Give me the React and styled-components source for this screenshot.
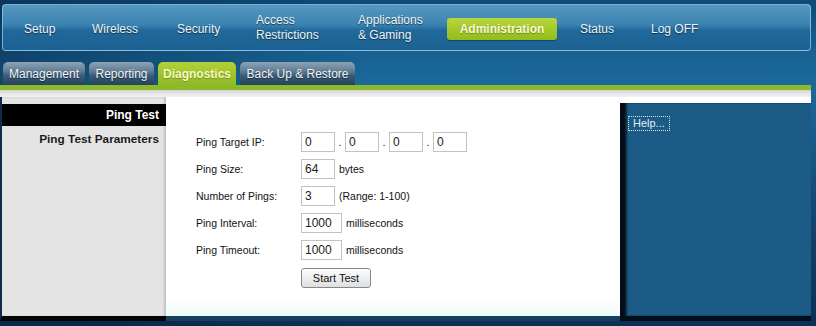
import React from 'react';
import styled, { createGlobalStyle } from 'styled-components';

const GlobalStyle = createGlobalStyle`
  body {
    margin: 0;
    background: #0d3d66;
    font-family: "Liberation Sans", Arial, sans-serif;
  }
`;

const Page = styled.div`
  width: 816px;
  height: 326px;
  box-sizing: border-box;
  padding-top: 4px;
  overflow: hidden;
  background:
    linear-gradient(90deg, rgba(4, 28, 58, 0.45) 0%, rgba(4, 28, 58, 0) 45%),
    linear-gradient(180deg, #0f4a78 0px, #17608f 50px, #1b6a9b 85px, #123f69 240px, #0c2f55 326px);
`;

const NavBar = styled.div`
  width: 809px;
  height: 47px;
  margin-left: 2px;
  box-sizing: border-box;
  border: 1px solid rgba(150, 205, 235, 0.75);
  border-radius: 4px;
  background: linear-gradient(180deg, #5698c0 0%, #3a83b1 44%, #21699a 56%, #1b6293 100%);
  display: flex;
  align-items: center;
  padding: 3px 0 0 21px;
`;

const NavItem = styled.div`
  width: ${(p) => p.$w}px;
  flex: none;
  color: #eef3f7;
  font-size: 12px;
  line-height: 15px;
  text-shadow: 0 1px 1px rgba(0, 0, 0, 0.55);
  margin-top: ${(p) => (p.$two ? '-2px' : '0')};
`;

const AdminButton = styled.div`
  width: 110px;
  height: 22px;
  margin-top: -1px;
  border-radius: 3px;
  background: linear-gradient(180deg, #b9d540 0%, #a6c92a 50%, #93ba1c 100%);
  box-shadow: 0 1px 1px rgba(0, 0, 0, 0.3);
  color: #f7f7d6;
  font-weight: bold;
  font-size: 12px;
  line-height: 22px;
  text-align: center;
  text-shadow: 0 1px 1px rgba(60, 80, 0, 0.5);
`;

const TabRow = styled.div`
  display: flex;
  gap: 4px;
  margin-top: 11px;
  padding-left: 3px;
  height: 23px;
`;

const Tab = styled.div`
  width: ${(p) => p.$w}px;
  box-sizing: border-box;
  border-radius: 5px 5px 0 0;
  font-size: 12px;
  line-height: 24px;
  text-align: center;
  color: ${(p) => (p.$active ? '#f6f6c8' : '#f2f5f8')};
  font-weight: ${(p) => (p.$active ? 'bold' : 'normal')};
  background: ${(p) =>
    p.$active
      ? 'linear-gradient(180deg, #b3d13a 0%, #9fc327 60%, #8dba2b 100%)'
      : 'linear-gradient(180deg, #8ea3b3 0%, #5f7d95 40%, #3a5a77 60%, #23435f 100%)'};
  text-shadow: ${(p) => (p.$active ? '0 1px 1px rgba(60,80,0,.4)' : '0 1px 1px rgba(0,0,0,.5)')};
`;

const Frame = styled.div`
  width: 811px;
  border-top: 5px solid #8cba2b;
`;

const GreyStrip = styled.div`
  height: 7px;
  background: linear-gradient(180deg, #d0d4d0 0%, #e6e6e6 50%, #f2f2f2 100%);
`;

const Columns = styled.div`
  display: flex;
  height: 224px;
`;

const Sidebar = styled.div`
  width: 164px;
  flex: none;
  border-left: 2px solid #0e2b48;
  border-bottom: 5px solid #050505;
  background: #e4e4e4;
  box-shadow: inset -2px 0 2px rgba(0, 0, 0, 0.15);
  padding-top: 7px;
`;

const SideHeader = styled.div`
  height: 22px;
  background: #000;
  color: #fff;
  font-weight: bold;
  font-size: 12px;
  line-height: 22px;
  text-align: right;
  padding-right: 7px;
`;

const SideItem = styled.div`
  color: #1a1a1a;
  font-weight: bold;
  font-size: 11.8px;
  line-height: 14px;
  text-align: right;
  padding: 6px 7px 0 0;
`;

const Main = styled.div`
  flex: 1;
  border-bottom: 5px solid #163f5e;
  background: linear-gradient(180deg, #ffffff 92%, #effafa 100%);
  padding: 35px 0 0 30px;
`;

const Form = styled.div`
  display: grid;
  grid-template-columns: 105px auto;
  row-gap: 7px;
  align-items: center;
`;

const Label = styled.div`
  font-size: 10.5px;
  color: #111;
`;

const Field = styled.div`
  display: flex;
  align-items: center;
  height: 20px;
`;

const Input = styled.div`
  width: ${(p) => p.$w}px;
  height: 20px;
  box-sizing: border-box;
  border: 1px solid #c2c2c2;
  padding-left: 3px;
  font-size: 12px;
  line-height: 18px;
  color: #222;
  background: #fff;
`;

const Dot = styled.span`
  width: 10px;
  text-align: center;
  font-size: 11px;
  color: #222;
`;

const Unit = styled.span`
  margin-left: 4px;
  font-size: 10.5px;
  color: #111;
`;

const StartButton = styled.div`
  grid-column: 2;
  width: 70px;
  height: 20px;
  margin-top: 1px;
  box-sizing: border-box;
  border: 1px solid #7d8b97;
  border-radius: 3px;
  background: linear-gradient(180deg, #fbfbfb 0%, #ececec 60%, #dedede 100%);
  font-size: 11px;
  line-height: 18px;
  text-align: center;
  color: #111;
`;

const HelpCol = styled.div`
  width: 191px;
  flex: none;
  background: #fff;
  padding-top: 6px;
  display: flex;
`;

const HelpPanel = styled.div`
  flex: 1;
  background: #1b5b86;
  border-left: 5px solid #050d18;
  border-bottom: 5px solid #03101c;
  box-shadow: inset 2px 0 2px rgba(0, 0, 0, 0.6);
  padding: 10px 0 0 3px;
`;

const HelpLink = styled.div`
  display: inline-block;
  border: 1px dotted #d8e4ec;
  padding: 0 4px 0 4px;
  color: #e6eef4;
  font-size: 11px;
  line-height: 13px;
`;

const navItems = [
  { label: 'Setup', w: 68 },
  { label: 'Wireless', w: 85 },
  { label: 'Security', w: 79 },
  { label: ['Access', 'Restrictions'], w: 102 },
  { label: ['Applications', '& Gaming'], w: 89 },
];

const tabs = [
  { label: 'Management', w: 82 },
  { label: 'Reporting', w: 65 },
  { label: 'Diagnostics', w: 78, active: true },
  { label: 'Back Up & Restore', w: 115 },
];

export default function App() {
  return (
    <>
      <GlobalStyle />
      <Page>
        <NavBar>
          {navItems.map((n, i) => (
            <NavItem key={i} $w={n.w} $two={Array.isArray(n.label)}>
              {Array.isArray(n.label) ? (
                <>
                  {n.label[0]}
                  <br />
                  {n.label[1]}
                </>
              ) : (
                n.label
              )}
            </NavItem>
          ))}
          <NavItem $w={133}>
            <AdminButton>Administration</AdminButton>
          </NavItem>
          <NavItem $w={71}>Status</NavItem>
          <NavItem $w={80}>Log OFF</NavItem>
        </NavBar>

        <TabRow>
          {tabs.map((t) => (
            <Tab key={t.label} $w={t.w} $active={t.active}>
              {t.label}
            </Tab>
          ))}
        </TabRow>

        <Frame>
          <GreyStrip />
          <Columns>
            <Sidebar>
              <SideHeader>Ping Test</SideHeader>
              <SideItem>Ping Test Parameters</SideItem>
            </Sidebar>

            <Main>
              <Form>
                <Label>Ping Target IP:</Label>
                <Field>
                  <Input $w={34}>0</Input>
                  <Dot>.</Dot>
                  <Input $w={34}>0</Input>
                  <Dot>.</Dot>
                  <Input $w={34}>0</Input>
                  <Dot>.</Dot>
                  <Input $w={34}>0</Input>
                </Field>

                <Label>Ping Size:</Label>
                <Field>
                  <Input $w={34}>64</Input>
                  <Unit>bytes</Unit>
                </Field>

                <Label>Number of Pings:</Label>
                <Field>
                  <Input $w={34}>3</Input>
                  <Unit>(Range: 1-100)</Unit>
                </Field>

                <Label>Ping Interval:</Label>
                <Field>
                  <Input $w={41}>1000</Input>
                  <Unit>milliseconds</Unit>
                </Field>

                <Label>Ping Timeout:</Label>
                <Field>
                  <Input $w={41}>1000</Input>
                  <Unit>milliseconds</Unit>
                </Field>

                <StartButton>Start Test</StartButton>
              </Form>
            </Main>

            <HelpCol>
              <HelpPanel>
                <HelpLink>Help...</HelpLink>
              </HelpPanel>
            </HelpCol>
          </Columns>
        </Frame>
      </Page>
    </>
  );
}
